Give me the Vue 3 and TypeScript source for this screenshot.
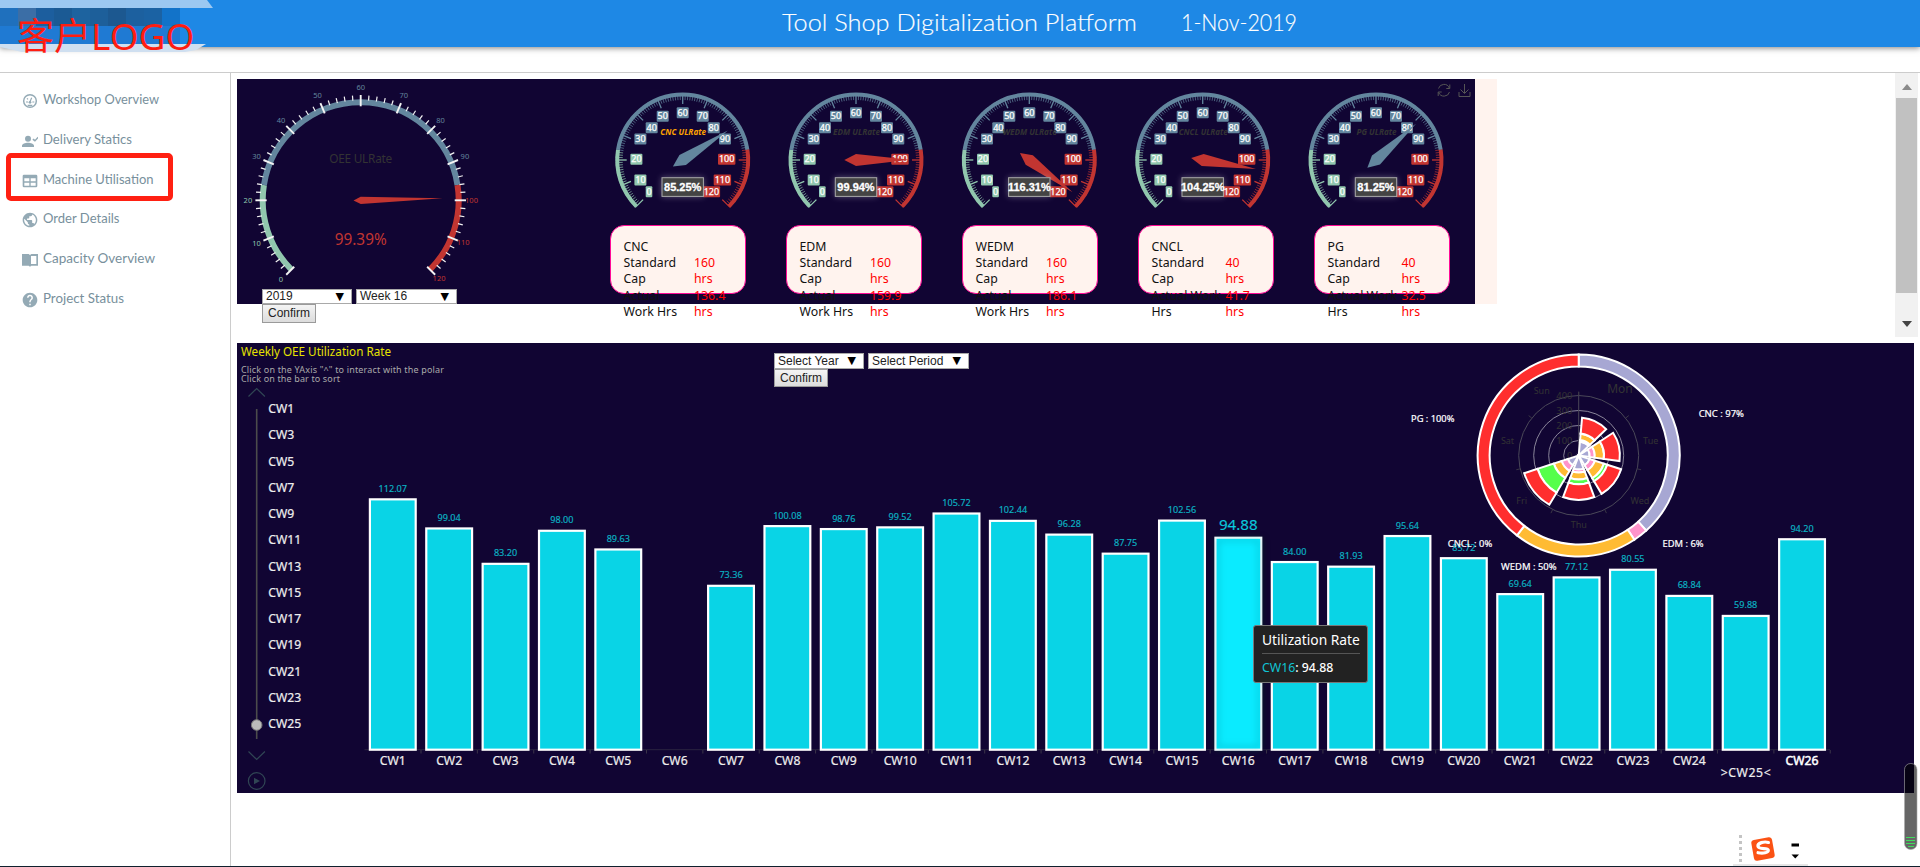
<script setup lang="ts">
interface Pt { x: number; y: number }

const polar = (cx: number, cy: number, r: number, deg: number): Pt => {
  const a = (deg * Math.PI) / 180
  return { x: cx + r * Math.cos(a), y: cy - r * Math.sin(a) }
}
const p = (q: Pt): string => `${q.x.toFixed(2)} ${q.y.toFixed(2)}`

/* dial angle for a value on the 0-120 scale */
const dial = (v: number): number => 225 - (270 * v) / 120
const zone = (v: number): string => (v < 24 ? '#91c7ae' : v < 96 ? '#63869e' : '#c23531')

const dialArc = (cx: number, cy: number, r: number, from: number, to: number): string => {
  const large = to - from > 80 ? 1 : 0
  return `M${p(polar(cx, cy, r, dial(from)))}A${r} ${r} 0 ${large} 1 ${p(polar(cx, cy, r, dial(to)))}`
}
const needle = (cx: number, cy: number, v: number, len: number, half: number, tail: number): string => {
  const a = dial(v)
  return `M${p(polar(cx, cy, len, a))}L${p(polar(cx, cy, half, a + 90))}L${p(polar(cx, cy, tail, a + 180))}L${p(polar(cx, cy, half, a - 90))}Z`
}
const zones = [[0, 24], [24, 96], [96, 120]]

const ticks = (cx: number, cy: number, step: number, major: number[], minor: number[]) => {
  const out: { d: string; main: boolean; c: string }[] = []
  for (let v = 0; v <= 120; v += step) {
    const main = v % 10 === 0
    const [a, b] = main ? major : minor
    out.push({ d: `M${p(polar(cx, cy, a, dial(v)))}L${p(polar(cx, cy, b, dial(v)))}`, main, c: zone(v) })
  }
  return out
}

const M = { x: 360.7, y: 200.3 }
const mainTicks = ticks(M.x, M.y, 2, [94, 105.3], [100, 105])
const mainLabels = Array.from({ length: 13 }, (_, i) => {
  const v = i * 10
  return { v, ...polar(M.x, M.y - 0.5, v >= 100 ? 110.8 : 112.8, dial(v)), c: zone(v) }
})

const gauges = [
  { name: 'CNC', v: 85.25, x: 682.7, tw: 45.7, cap: '160', work: '136.4', label: ['Actual', 'Work Hrs'] },
  { name: 'EDM', v: 99.94, x: 856, tw: 47, cap: '160', work: '159.9', label: ['Actual', 'Work Hrs'] },
  { name: 'WEDM', v: 116.31, x: 1029.3, tw: 54, cap: '160', work: '186.1', label: ['Actual', 'Work Hrs'] },
  { name: 'CNCL', v: 104.25, x: 1202.7, tw: 49, cap: '40', work: '41.7', label: ['Actual Work', 'Hrs'] },
  { name: 'PG', v: 81.25, x: 1376, tw: 40, cap: '40', work: '32.5', label: ['Actual Work', 'Hrs'] },
]
const smallTicks = ticks(0, 0, 1, [67, 56], [67, 60])
const smallLabels = [
  [0, -33.7, 31.7], [10, -42.3, 20], [20, -46.3, -0.7], [30, -42.3, -21], [40, -31, -32.3],
  [50, -20, -43.7], [60, 0, -47.3], [70, 20, -43.7], [80, 31, -32.3], [90, 42.3, -21],
  [100, 44, -0.7], [110, 39.7, 20], [120, 28.7, 31.7],
].map(([v, x, y]) => ({ v, x, y, w: String(v).length * 5.4 + 1.2, c: zone(v) }))

const values = [112.07, 99.04, 83.2, 98, 89.63, null, 73.36, 100.08, 98.76, 99.52, 105.72, 102.44, 96.28,
  87.75, 102.56, 94.88, 84, 81.93, 95.64, 85.72, 69.64, 77.12, 80.55, 68.84, 59.88, 94.2]
const bars = values.map((v, i) => {
  const h = (v ?? 0) * 2.234
  return { n: i + 1, v, x: 392.8 + i * 56.37, y: 749.7 - h, h, hot: i === 15 }
})
const steps = Array.from({ length: 13 }, (_, i) => ({ t: `CW${i * 2 + 1}`, y: 408.7 + i * 26.25 }))

/* ring and polar chart: angles clockwise from twelve o'clock */
const D = { x: 1578.7, y: 455.5 }
const sector = (r0: number, r1: number, a0: number, a1: number): string => {
  const l = a1 - a0 > 180 ? 1 : 0
  const q = (r: number, a: number) => p(polar(D.x, D.y, r, 90 - a))
  return `M${q(r0, a0)}L${q(r1, a0)}A${r1} ${r1} 0 ${l} 1 ${q(r1, a1)}L${q(r0, a1)}A${r0} ${r0} 0 ${l} 0 ${q(r0, a0)}Z`
}
const share = [
  { v: 97, c: '#a7a7d3' }, { v: 6, c: '#ff94cb' }, { v: 50, c: '#ffbb33' }, { v: 100, c: '#ff2e2e' },
]
let acc = 0
const ring = share.map((s) => {
  const a0 = (acc / 253) * 360
  acc += s.v
  return { d: sector(89, 101, a0, (acc / 253) * 360), c: s.c }
})
const stackColors = ['#a7a7d3', '#ff94cb', '#ffbb33', '#55ff4b', '#ff2e2e']
const stacks = [
  [13.7, 15.5, 21.9, 22, 38], [11, 16, 25.3, 25.4, 41.2], [11.5, 17, 26.5, 30, 44.6],
  [14, 17, 24, 28.8, 44.4], [11.5, 18, 26.2, 43.3, 57.3],
]
const petals = stacks.flatMap((s, k) => s.map((r, j) => ({
  d: sector(j ? s[j - 1] : 0.01, r, k * 51.43 + 5.1, k * 51.43 + 46.3), c: stackColors[j],
})))
const ringLabels = [
  { t: 'CNC : 97%', x: 1721.3, y: 414, w: 45.3 }, { t: 'EDM : 6%', x: 1683, y: 543.7, w: 41 },
  { t: 'WEDM : 50%', x: 1528.8, y: 567, w: 55.5 }, { t: 'CNCL : 0%', x: 1470, y: 543.7, w: 44.500 },
  { t: 'PG : 100%', x: 1432.7, y: 418.7, w: 43.300 },
]
const days = [
  { t: 'Mon', x: 1620, y: 389, s: 12 }, { t: 'Tue', x: 1650.7, y: 440.3, s: 9 }, { t: 'Wed', x: 1640, y: 500.5, s: 9 },
  { t: 'Thu', x: 1578.7, y: 524.7, s: 9 }, { t: 'Fri', x: 1521.7, y: 500.5, s: 9 }, { t: 'Sat', x: 1507.5, y: 440.3, s: 9 },
  { t: 'Sun', x: 1541.7, y: 391, s: 9 },
]
const dayTicks = Array.from({ length: 7 }, (_, i) => {
  const a = 90 - i * 51.43
  return `M${p(polar(D.x, D.y, 60, a))}L${p(polar(D.x, D.y, 64, a))}`
})

const menu = [
  { t: 'Workshop Overview', icon: 'gauge', w: 116 },
  { t: 'Delivery Statics', icon: 'user', w: 89 },
  { t: 'Machine Utilisation', icon: 'table', w: 110.5 },
  { t: 'Order Details', icon: 'globe', w: 76.5 },
  { t: 'Capacity Overview', icon: 'book', w: 112 },
  { t: 'Project Status', icon: 'help', w: 81 },
]
const mosaic = ['#1f70bd', '#3b6ea6', '#1c5e9e', '#1b5a94', '#1d639f', '#1d5f9a', '#1c5890', '#1c609f', '#1b62a3', '#1273c9']
</script>

<template>
  <div class="page">
    <header class="top">
      <div class="logo">
        <div class="strip"></div>
        <div class="mosaic"><i v-for="c in mosaic" :key="c" :style="{ background: c }"></i></div>
        <div class="strip low"></div>
        <span class="logo-text">客户LOGO</span>
      </div>
      <svg class="title" width="540" height="47" viewBox="780 0 540 47">
        <text x="782" y="31" textLength="355" lengthAdjust="spacingAndGlyphs">Tool Shop Digitalization Platform</text>
        <text x="1181" y="31" textLength="116" lengthAdjust="spacingAndGlyphs">1-Nov-2019</text>
      </svg>
    </header>

    <div class="body">
      <nav class="side">
        <a v-for="m in menu" :key="m.t" class="item" :class="{ marked: m.icon === 'table' }">
          <svg class="ico" width="16" height="16" viewBox="0 0 24 24">
            <template v-if="m.icon === 'gauge'">
              <circle cx="12" cy="12" r="9.500" fill="none" stroke="#94aab5" stroke-width="2.200" />
              <path d="M6 13.500h3M15.500 13.500h3M12 13l2.500-6M7.500 8l1.500 1.500M8.500 18.500h7" fill="none" stroke="#94aab5" stroke-width="1.800" />
              <circle cx="12" cy="14" r="2" />
            </template>
            <template v-else-if="m.icon === 'user'">
              <circle cx="9" cy="8.500" r="4.500" />
              <path d="M0 21v-2c0-3 5-4.500 9-4.500s9 1.500 9 4.500v2zM15.500 10l2-1.800 2 2 4-4.500 1.500 1.500-5.500 6z" />
            </template>
            <path v-else-if="m.icon === 'table'" d="M3 2.500h18a2 2 0 0 1 2 2v15a2 2 0 0 1-2 2H3a2 2 0 0 1-2-2v-15a2 2 0 0 1 2-2zm.5 5.500v4.500H11V8zm9.500 0v4.500h7.500V8zM3.500 14.800v4.200H11v-4.200zm9.500 0v4.200h7.500v-4.200z" fill-rule="evenodd" />
            <path v-else-if="m.icon === 'globe'" transform="translate(-1.200 -1.200) scale(1.100)" d="M12 2C6.480 2 2 6.480 2 12s4.480 10 10 10 10-4.480 10-10S17.520 2 12 2zm-1 17.930c-3.950-.49-7-3.850-7-7.930 0-.62.08-1.210.21-1.790L9 15v1c0 1.100.9 2 2 2v1.930zm6.900-2.540c-.26-.81-1-1.390-1.900-1.390h-1v-3c0-.55-.45-1-1-1H8v-2h2c.55 0 1-.45 1-1V7h2c1.100 0 2-.9 2-2v-.41c2.930 1.190 5 4.060 5 7.410 0 2.080-.8 3.970-2.100 5.390z" />
            <path v-else-if="m.icon === 'book'" d="M0 3h10l2 1.500L14 3h10v17.500H14l-2 1.500-2-1.500H0zM13.500 6v12H21.500V6z" fill-rule="evenodd" />
            <path v-else transform="translate(-1.200 -1.200) scale(1.100)" d="M12 2C6.480 2 2 6.480 2 12s4.480 10 10 10 10-4.480 10-10S17.520 2 12 2zm1 17h-2v-2h2v2zm2.070-7.750l-.9.920C13.450 12.900 13 13.500 13 15h-2v-.5c0-1.100.45-2.100 1.170-2.830l1.240-1.260c.37-.36.59-.86.59-1.410 0-1.100-.9-2-2-2s-2 .9-2 2H8c0-2.210 1.790-4 4-4s4 1.790 4 4c0 .88-.36 1.680-.93 2.250z" />
          </svg>
          <svg class="name" width="124" height="24">
            <text x="0" y="15.600" :textLength="m.w" lengthAdjust="spacingAndGlyphs">{{ m.t }}</text>
          </svg>
        </a>
      </nav>

      <main class="main">
        <section class="upper">
          <div class="gauges">
            <svg class="canvas" width="1238" height="225" viewBox="237 79 1238 225">
              <path v-for="z in zones" :key="z[0]" :d="dialArc(M.x, M.y, 98, z[0], z[1])" fill="none" :stroke="zone(z[0])" stroke-width="6" />
              <path v-for="t in mainTicks" :key="t.d" :d="t.d" stroke="#f4f4f4" :stroke-width="t.main ? 1.900 : 1.200" />
              <text v-for="l in mainLabels" :key="l.v" :x="l.x" :y="l.y + 2.800" :fill="l.c" font-size="7.500" text-anchor="middle">{{ l.v }}</text>
              <text :x="M.x" y="163.200" fill="#333" font-size="11.800" text-anchor="middle" textLength="63">OEE ULRate</text>
              <text :x="M.x" y="244.800" fill="#c23531" font-size="15.500" text-anchor="middle" textLength="52" lengthAdjust="spacingAndGlyphs">99.39%</text>
              <path :d="needle(M.x, M.y, 99.39, 82, 3.600, 7.200)" fill="#c23531" />

              <g v-for="g in gauges" :key="g.name" :transform="`translate(${g.x} 160)`">
                <path v-for="t in smallTicks" :key="t.d" :d="t.d" :stroke="t.c" :stroke-width="t.main ? 1.300 : 0.700" />
                <path v-for="z in zones" :key="z[0]" :d="dialArc(0, 0, 65.500, z[0], z[1])" fill="none" :stroke="zone(z[0])" stroke-width="4" />
                <g v-for="l in smallLabels" :key="l.v">
                  <rect :x="l.x - l.w / 2" :y="l.y - 5.500" :width="l.w" height="11" rx="1" :fill="l.c" />
                  <text class="lab" :x="l.x" :y="l.y + 3.100" text-anchor="middle">{{ l.v }}</text>
                </g>
                <text class="gname" :class="{ hot: g.name === 'CNC' }" x="0.500" y="-24.700" text-anchor="middle" :textLength="g.tw" lengthAdjust="spacingAndGlyphs">{{ g.name }} ULRate</text>
                <path :d="needle(0, 0, g.v, 54, 6, 11.700)" :fill="zone(g.v)" />
                <rect class="vbox" x="-20.700" y="17.700" width="41.400" height="18.700" />
                <text class="val" x="0" y="30.500" text-anchor="middle">{{ g.v.toFixed(2) }}%</text>
              </g>

              <g fill="none" stroke="#555" stroke-width="1">
                <path d="M1438.500 88.500a5.700 5.700 0 0 1 10.800-.5M1449.500 92a5.700 5.700 0 0 1-10.800.5M1449.800 84.500v4h-3.500M1438.200 96v-4h3.500" />
                <path d="M1464.500 84v9M1460.500 89.500l4 4 4-4M1459 92v4.500h11V92" />
              </g>
            </svg>
            <div class="edge"></div>
            <div class="cards">
              <div v-for="g in gauges" :key="g.name" class="card" :class="{ wide: g.label[1] === 'Hrs' }">
                <p class="head">{{ g.name }}</p>
                <div class="line"><p>Standard<br />Cap</p><p class="red">{{ g.cap }}<br />hrs</p></div>
                <div class="line"><p>{{ g.label[0] }}<br />{{ g.label[1] }}</p><p class="red">{{ g.work }}<br />hrs</p></div>
              </div>
            </div>
            <div class="form first">
              <div class="row"><span class="sel a">2019<b>▼</b></span><span class="sel b">Week 16<b>▼</b></span></div>
              <button class="btn">Confirm</button>
            </div>
          </div>
          <div class="bar-v">
            <i class="up"></i><span class="thumb"></span><i class="down"></i>
          </div>
        </section>

        <section class="lower">
          <svg class="canvas" width="1677" height="450" viewBox="237 343 1677 450">
            <defs>
              <filter id="soft" x="-0.200" y="-0.100" width="1.400" height="1.200"><feGaussianBlur stdDeviation="3" /></filter>
            </defs>
            <text x="241" y="356" fill="#e6e200" font-size="12" textLength="150" lengthAdjust="spacingAndGlyphs">Weekly OEE Utilization Rate</text>
            <text x="241" y="372.700" fill="#aaa" font-size="9" textLength="203">Click on the YAxis "^" to interact with the polar</text>
            <text x="241" y="382" fill="#aaa" font-size="9" textLength="99">Click on the bar to sort</text>

            <g fill="none" stroke="#304654" stroke-width="1.200">
              <path d="M248.500 396.500l8.200-8 8.200 8M248.500 751.500l8.200 8 8.200-8" />
              <circle cx="256.700" cy="781" r="8.300" />
              <path d="M254 777.700v6.600l6-3.300z" fill="#304654" stroke="none" />
            </g>
            <path d="M256.700 409v330" stroke="#4c4c4c" stroke-width="1.600" />
            <circle cx="256.700" cy="725" r="5.300" fill="#bbb" stroke="#777" />
            <text v-for="s in steps" :key="s.t" class="cw" x="268.300" :y="s.y + 4.500">{{ s.t }}</text>

            <path d="M364.500 749.700H1830" stroke="#2a2440" />
            <g v-for="b in bars" :key="b.n">
              <path :d="`M${b.x + 28.200} 750v3.500`" stroke="#3a3448" />
              <template v-if="b.v !== null">
                <rect v-if="b.hot" :x="b.x - 24" :y="b.y" width="49" :height="b.h" fill="#000" opacity="0.600" filter="url(#soft)" />
                <rect :x="b.x - 22.900" :y="b.y" width="45.800" :height="b.h" :fill="b.hot ? '#0aebff' : '#09d4e6'" stroke="#fff" stroke-width="2.200" />
                <rect v-if="b.hot" :x="b.x - 20.500" :y="b.y + 2.500" width="41" :height="b.h - 5" fill="none" stroke="#079db0" stroke-opacity="0.450" stroke-width="3" filter="url(#soft)" />
                <text :x="b.x" :y="b.hot ? 529.500 : b.y - 7.500" text-anchor="middle" :font-size="b.hot ? 15.200 : 9.100" :fill="b.hot ? '#0ad0e2' : '#0bb8ca'" stroke="#0a9bad" stroke-width="0.200">{{ b.v.toFixed(2) }}</text>
              </template>
              <text class="cw" :class="{ last: b.n === 26 }" :x="b.x" :y="b.n === 25 ? 776.700 : 764.600" text-anchor="middle" :textLength="b.n === 25 ? 50 : undefined">{{ b.n === 25 ? '>CW25<' : 'CW' + b.n }}</text>
            </g>

            <path v-for="r in ring" :key="r.d" :d="r.d" :fill="r.c" stroke="#fff" stroke-width="2" />
            <g fill="none">
              <circle v-for="r in [15, 30, 45]" :key="r" :cx="D.x" :cy="D.y" :r="r" stroke="#a7a4b2" stroke-width="0.800" />
              <circle :cx="D.x" :cy="D.y" r="60" stroke="#4a4858" />
              <path d="M1578.700 455V392" stroke="#4a4858" />
              <path v-for="d in dayTicks" :key="d" :d="d" stroke="#3a3745" />
            </g>
            <text v-for="k in 5" :key="k" x="1572.300" :y="473.500 - k * 15" fill="#333" font-size="9.300" text-anchor="end">{{ (k - 1) * 100 }}</text>
            <text v-for="d in days" :key="d.t" :x="d.x" :y="d.y + d.s * 0.360" fill="#333" :font-size="d.s" text-anchor="middle">{{ d.t }}</text>
            <path v-for="(s, i) in petals" :key="i" :d="s.d" :fill="s.c" stroke="#fff" stroke-width="2" />
            <text v-for="l in ringLabels" :key="l.t" class="rl" :x="l.x" :y="l.y + 3.200" text-anchor="middle" :textLength="l.w" lengthAdjust="spacingAndGlyphs">{{ l.t }}</text>
          </svg>

          <div class="form second">
            <div class="row"><span class="sel a">Select Year<b>▼</b></span><span class="sel b">Select Period<b>▼</b></span></div>
            <button class="btn">Confirm</button>
          </div>
          <div class="tip">
            <p class="th">Utilization Rate</p>
            <p class="tv"><em>CW16</em>: 94.88</p>
          </div>
        </section>
      </main>
    </div>

    <svg class="widget" width="14" height="88" viewBox="0 0 14 88">
      <rect x="0.500" y="0.500" width="12.500" height="86" rx="6" fill="#000" fill-opacity="0.600" stroke="#aaa" stroke-opacity="0.600" />
      <path d="M2 74.500h9M2 77.500h9M2 80.500h9M4 83.500h6" stroke="#3fdc5c" />
    </svg>
    <svg class="ime" width="80" height="34" viewBox="1732 833 80 34">
      <path d="M1740.500 835v30" stroke="#c4c4c4" stroke-width="3" stroke-dasharray="3 3" />
      <g transform="rotate(-10 1763 849)">
        <rect x="1752.500" y="838.500" width="21" height="21" rx="3" fill="#fb5214" />
        <path d="M1769.500 843.500c-4-2-11-1.500-11 2 0 4 9.500 2.500 9.500 5.500 0 2.800-6 2.500-10.500.8" fill="none" stroke="#fff" stroke-width="3.200" stroke-linecap="round" />
      </g>
      <path d="M1791.500 843.500h7.500v3h-7.500zM1791.500 854.500h7.500l-3.750 4z" fill="#000" />
      <path d="M1733 865h75" stroke="#ccc" />
    </svg>
    <div class="floor"></div>
  </div>
</template>

<style>
html, body { margin: 0; overflow: hidden; background: #fff; }
</style>

<style scoped>
.page {
  position: relative; width: 1920px; height: 867px; overflow: hidden; background: #fff;
  display: flex; flex-direction: column;
  font-family: "Noto Sans", "Open Sans", "Noto Sans CJK SC", sans-serif;
}
.page p { margin: 0; }
.top { position: relative; z-index: 2; height: 47px; background: #1e88e5; box-shadow: 0 1px 6px rgba(0, 0, 0, 0.5); flex: none; padding-left: 780px; }
.title { display: block; font-family: Lato, sans-serif; font-weight: 300; font-size: 23.5px; fill: #fff; stroke: #fff; stroke-width: 0.15px; }
.logo { position: absolute; left: 0; top: 0; width: 215px; height: 54px; }
.strip { height: 8px; background: #9cc8f1; clip-path: polygon(0 0, 207px 0, 213px 8px, 0 8px); }
.mosaic { display: flex; width: 180px; height: 36px; background: #1f7ad3; }
.mosaic i { width: 18px; height: 18px; }
.strip.low { background: #cfdff0; clip-path: polygon(0 0, 206px 0, 196px 6px, 185px 8px, 22px 8px, 0 3px); }
.logo-text { position: absolute; left: 17px; top: 9px; font: 37px/54px "Noto Sans", "Noto Sans CJK SC", sans-serif; color: #ff1d10; white-space: nowrap; }
.body { display: flex; flex: 1; margin-top: 25px; border-top: 1px solid #ccc; min-height: 0; }
.side { box-sizing: border-box; width: 231px; border-right: 1px solid #ccc; padding: 7.5px 0 0 6px; display: flex; flex-direction: column; flex: none; }
.item { display: flex; align-items: center; gap: 5px; height: 39.7px; padding-left: 16px; font-family: Lato, sans-serif; font-size: 13.5px; }
.item svg { fill: #78909c; flex: none; }
.item .name { overflow: visible; }
.item .ico { fill: #94aab5; position: relative; top: 1px; }
.item.marked { box-sizing: border-box; width: 167px; height: 48px; margin: -6.7px 0 -1.6px; border: 5px solid #ff2012; border-radius: 5px; padding: 5px 0 0 11px; }
.main { flex: 1; display: flex; flex-direction: column; padding-left: 6px; min-width: 0; }
.upper { display: flex; justify-content: space-between; height: 264px; margin-bottom: 6px; }
.gauges { position: relative; display: flex; height: 225px; margin-top: 6px; }
.canvas { display: block; background: #110533; flex: none; }
.edge { width: 22px; background: #fff3ee; }
.lab { fill: #fff; font-size: 9px; stroke: #fff; stroke-width: 0.25px; }
.gname { font-size: 8.6px; font-weight: 700; font-style: italic; fill: #333; }
.gname.hot { fill: #ffa200; }
.vbox { fill: #444; stroke: #aaa; stroke-width: 1px; filter: drop-shadow(0 0 3px rgba(255, 255, 255, 0.3)); }
.val { font: 700 11px "Liberation Sans", sans-serif; fill: #fff; stroke: #fff; stroke-width: 0.3px; }
.cards { position: absolute; left: 373px; top: 146px; display: flex; gap: 40px; }
.card { box-sizing: border-box; width: 136px; height: 69px; border: 1px solid #ff0a96; border-radius: 14px; background: #fff3ee; padding: 12px 0 0 12.5px; font-size: 12.3px; line-height: 16.3px; color: #111; white-space: nowrap; }
.card .head { line-height: 17px; }
.line { display: grid; grid-template-columns: 70.5px auto; }
.wide .line { grid-template-columns: 74px auto; }
.red { color: #f00; }
.form { position: absolute; font-family: "Liberation Sans", sans-serif; font-size: 12px; color: #222; }
.first { left: 25px; top: 210px; }
.second { left: 537px; top: 10px; }
.row { display: flex; gap: 4px; }
.sel { box-sizing: border-box; height: 15px; border: 1px solid #a9a9a9; background: #fff; display: flex; justify-content: space-between; align-items: center; padding: 0 7px 0 3px; white-space: nowrap; line-height: 13px; }
.sel b { font: 11px/10px "DejaVu Sans", sans-serif; color: #000; }
.sel.a { width: 90px; }
.sel.b { width: 101px; }
.btn { display: block; box-sizing: border-box; width: 54px; height: 19px; border: 1px solid #9a9a9a; background: linear-gradient(#f4f4f4, #dcdcdc); padding: 0; font: 12px/15px "Liberation Sans", sans-serif; color: #222; }
.second .sel { height: 16px; }
.second .btn { height: 18px; }
.bar-v { width: 23px; margin-right: 2px; background: #f1f1f1; display: flex; flex-direction: column; align-items: center; box-sizing: border-box; padding: 11px 0 10px; }
.up, .down { border: 5px solid transparent; }
.up { border-top: 0; border-bottom: 6px solid #8a8a8a; }
.down { border-bottom: 0; border-top: 6px solid #444; margin-top: auto; }
.thumb { width: 21px; height: 195px; margin-top: 8px; background: #c1c1c1; }
.lower { position: relative; width: 1677px; height: 450px; }
.cw { fill: #eee; font-size: 12.2px; stroke: #eee; stroke-width: 0.2px; }
.cw.last { fill: #fff; stroke: #fff; stroke-width: 0.5px; }
.rl { fill: #fff; font-size: 9.2px; stroke: #fff; stroke-width: 0.2px; }
.tip { position: absolute; left: 1016px; top: 282px; box-sizing: border-box; width: 115px; height: 58px; background: #222; border: 1px solid #777; border-radius: 3px; padding: 4px 7px 0 8px; color: #fff; white-space: nowrap; }
.th { font-size: 13.8px; line-height: 20px; height: 23px; border-bottom: 1px solid #555; letter-spacing: -0.02px; }
.tv { font-size: 12.3px; line-height: 27px; font-weight: 500; }
.tv em { font-style: normal; color: #10c4d4; font-weight: 400; }
.widget { position: absolute; left: 1904px; top: 763px; }
.ime { position: absolute; left: 1732px; top: 833px; }
.floor { position: absolute; left: 0; right: 0; bottom: 0; height: 1px; background: #10202e; }
</style>
